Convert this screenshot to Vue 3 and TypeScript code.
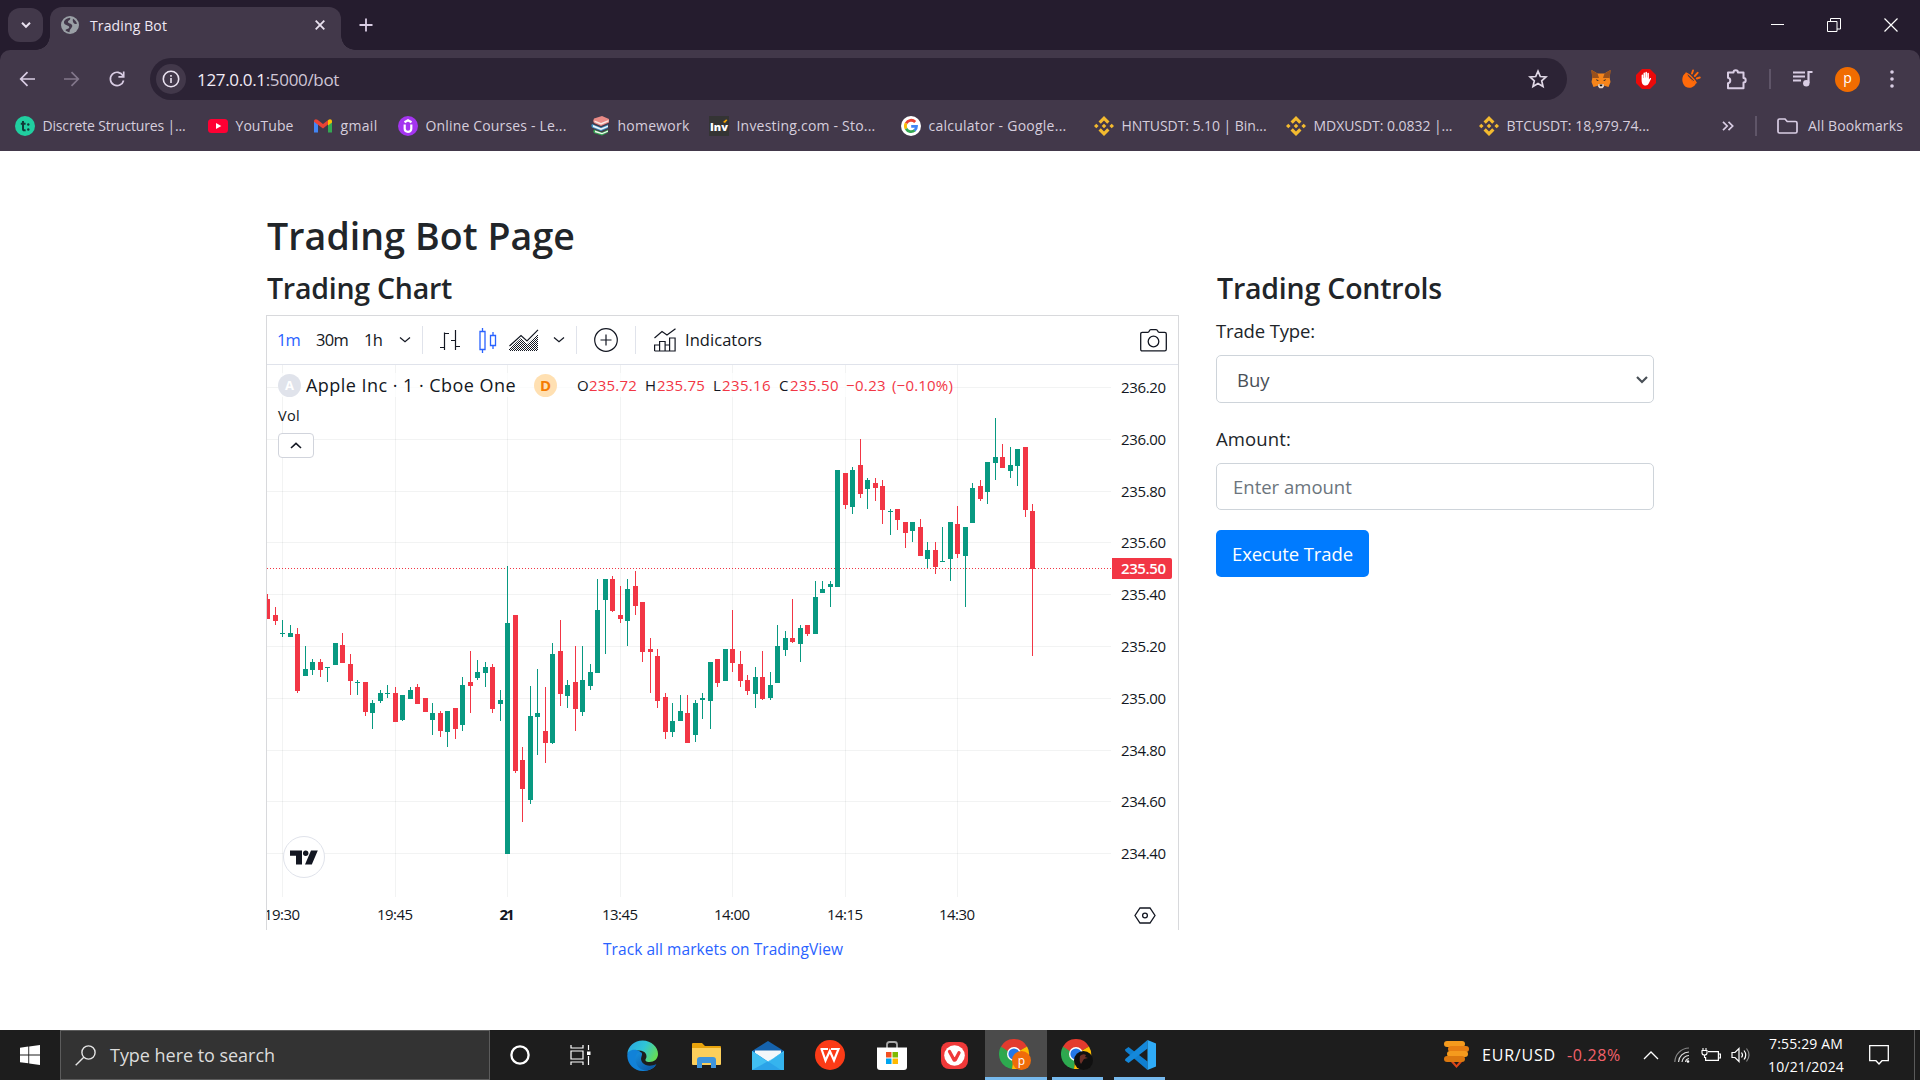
<script setup lang="ts">
import { ref } from 'vue'
import type { Directive } from 'vue'

interface Bookmark { icon: string; label: string; width: number; slot: number }
interface Candle { x: number; high: number; top: number; bottom: number; low: number; up: boolean }
type Bar = [up: 0 | 1, high: number, top: number, bottom: number, low: number]

// Tracks a label so that it occupies the given width in pixels.
const vFit: Directive<HTMLElement, number> = {
  mounted(el, { value }) {
    const count = (el.textContent ?? '').trim().length
    const natural = el.getBoundingClientRect().width
    el.style.letterSpacing = `${(value - natural) / count}px`
  },
}

const bookmarks: Bookmark[] = [
  { icon: 'toptal', label: 'Discrete Structures |...', width: 143, slot: 193 },
  { icon: 'youtube', label: 'YouTube', width: 58, slot: 105 },
  { icon: 'gmail', label: 'gmail', width: 37, slot: 85 },
  { icon: 'udemy', label: 'Online Courses - Le...', width: 141, slot: 192 },
  { icon: 'books', label: 'homework', width: 72, slot: 119 },
  { icon: 'inv', label: 'Investing.com - Sto...', width: 139, slot: 192 },
  { icon: 'google', label: 'calculator - Google...', width: 138, slot: 193 },
  { icon: 'binance', label: 'HNTUSDT: 5.10 | Bin...', width: 145, slot: 192 },
  { icon: 'binance', label: 'MDXUSDT: 0.0832 |...', width: 139, slot: 193 },
  { icon: 'binance', label: 'BTCUSDT: 18,979.74...', width: 143, slot: 192 },
]

// Bars as [up, high, bodyTop, bodyBottom, low], in thirds of a pixel from the segment's top.
const segments: { top: number; bars: Bar[] }[] = [
  {
    top: 185,
    bars: [
      [0, 132, 147, 207, 207], [0, 171, 195, 213, 225], [1, 210, 249, 252, 261], [1, 225, 249, 261, 261],
      [0, 234, 252, 423, 429], [1, 288, 357, 378, 378], [1, 327, 336, 360, 375], [0, 327, 336, 360, 381],
      [1, 351, 351, 354, 396], [1, 279, 279, 345, 345], [0, 249, 285, 339, 339], [0, 312, 342, 393, 435],
      [1, 390, 396, 399, 435], [0, 396, 396, 486, 498], [1, 450, 459, 489, 537], [1, 420, 429, 453, 459],
      [1, 405, 429, 432, 444], [0, 411, 429, 516, 516], [1, 435, 435, 510, 513], [1, 411, 420, 447, 447],
      [0, 402, 411, 462, 462], [0, 444, 444, 486, 486], [1, 459, 489, 510, 555], [0, 483, 489, 543, 561],
      [1, 483, 483, 546, 591], [0, 474, 474, 537, 567], [1, 381, 405, 525, 543], [0, 303, 396, 408, 489],
      [1, 330, 366, 384, 390], [1, 336, 351, 369, 411], [0, 342, 351, 477, 489], [1, 420, 450, 462, 513],
      [1, 48, 219, 912, 912], [0, 195, 195, 663, 669], [0, 591, 630, 717, 816], [1, 408, 498, 750, 762],
      [1, 357, 489, 501, 615], [0, 411, 543, 579, 639], [1, 279, 312, 579, 582], [0, 210, 303, 432, 468],
      [1, 390, 405, 438, 474], [0, 288, 396, 477, 543], [1, 288, 390, 486, 498], [1, 342, 366, 408, 420],
      [1, 87, 180, 369, 369], [1, 87, 87, 150, 312], [0, 78, 87, 183, 186], [0, 108, 195, 207, 219],
      [1, 87, 117, 213, 288], [0, 63, 108, 168, 195], [0, 156, 156, 306, 336], [0, 264, 297, 306, 429],
      [0, 297, 318, 453, 474], [0, 429, 441, 546, 567], [1, 459, 513, 546, 561], [1, 435, 483, 513, 513],
      [0, 435, 489, 579, 579], [1, 450, 459, 555, 576], [1, 429, 444, 450, 507], [1, 336, 336, 453, 537],
      [0, 327, 327, 399, 411], [1, 297, 297, 393, 393], [0, 180, 297, 339, 366], [0, 303, 342, 393, 411],
      [0, 375, 390, 423, 435], [1, 351, 381, 432, 474], [0, 303, 381, 447, 450], [1, 366, 405, 444, 450],
      [1, 225, 288, 399, 399], [1, 243, 264, 300, 318], [0, 147, 264, 276, 279],
    ],
  },
  {
    top: 35,
    bars: [
      [1, 675, 684, 732, 786], [0, 675, 675, 702, 708], [1, 543, 591, 702, 702], [1, 543, 567, 579, 579],
      [1, 543, 552, 561, 621], [1, 210, 210, 561, 561], [0, 219, 219, 315, 327], [1, 201, 210, 321, 342],
      [0, 117, 195, 282, 294], [1, 234, 240, 267, 327], [0, 234, 249, 264, 303], [0, 240, 258, 330, 372],
      [1, 327, 333, 336, 405], [0, 327, 327, 360, 390], [0, 366, 366, 399, 444], [1, 366, 366, 393, 426],
      [0, 357, 381, 468, 468], [1, 426, 450, 477, 504], [0, 426, 450, 501, 522], [1, 381, 483, 486, 486],
      [1, 366, 366, 477, 543], [0, 318, 372, 462, 474], [1, 381, 381, 468, 621], [1, 249, 264, 369, 369],
      [0, 240, 258, 297, 303], [1, 186, 186, 276, 312], [1, 54, 171, 189, 240], [0, 132, 171, 204, 204],
      [1, 141, 195, 213, 234], [1, 147, 147, 198, 258], [0, 141, 141, 330, 351], [0, 312, 333, 507, 768],
    ],
  },
]

const candles: Candle[] = segments
  .flatMap(({ top, bars }) => bars.map((bar) => ({ top, bar })))
  .map(({ top, bar: [up, high, bodyTop, bodyBottom, low] }, i) => ({
    x: Math.round(7.5 * i),
    high: top + high / 3,
    top: top + bodyTop / 3,
    bottom: top + bodyBottom / 3,
    low: top + low / 3,
    up: up === 1,
  }))

const prices = [
  { label: '236.20', y: 22 }, { label: '236.00', y: 74 }, { label: '235.80', y: 126 },
  { label: '235.60', y: 177 }, { label: '235.40', y: 229 }, { label: '235.20', y: 281 },
  { label: '235.00', y: 333 }, { label: '234.80', y: 385 }, { label: '234.60', y: 436 },
  { label: '234.40', y: 488 },
]
const times = [
  { label: '19:30', x: 15 }, { label: '19:45', x: 128 }, { label: '21', x: 240, bold: true },
  { label: '13:45', x: 353 }, { label: '14:00', x: 465 }, { label: '14:15', x: 578 }, { label: '14:30', x: 690 },
]

const legend = [
  { key: 'O', value: '235.72', kw: 12, vw: 48, gap: 8 },
  { key: 'H', value: '235.75', kw: 12, vw: 48, gap: 8 },
  { key: 'L', value: '235.16', kw: 9, vw: 49, gap: 8 },
  { key: 'C', value: '235.50', kw: 11, vw: 49, gap: 7 },
]

const tradeType = ref('buy')
const amount = ref('')
</script>

<template>
  <div class="screen">
    <header class="tabs">
      <button class="tab-search">
        <svg width="12" height="12" viewBox="0 0 12 12"><path d="M2 3.800l4 4 4-4" fill="none" stroke="#e9e1ef" stroke-width="2" /></svg>
      </button>
      <div class="tab">
        <svg width="18" height="18" viewBox="0 0 18 18">
          <circle cx="9" cy="9" r="9" fill="#9aa0a6" />
          <path d="M3 5.500C4 3.500 6 2 9 1.800c1 1-.4 2.300-1.800 3.100-.4 1-.3 1.800 1 2.300 2.200.6 3.400 1.500 3 3.200-.5 1.700-2.300 2.200-2.700 5.800-1.500-.2-3-.8-4.200-2.200 1.500-1.200 3.800-1 4-2.700C8 9.500 6 9.700 4.700 8.800 3.300 8 2.700 7 3 5.500z" fill="#42384a" />
          <path d="M12 2.800c2 1 3.600 3 3.900 5-1.500.6-2.600.3-3.300-.8-.7-1.200-1.200-2.600-.6-4.200z" fill="#42384a" />
        </svg>
        <span v-fit="77" class="tab-title">Trading Bot</span>
        <svg class="tab-close" width="10" height="10" viewBox="0 0 10 10"><path d="M.7.7l8.600 8.600M9.300.7L.7 9.300" stroke="#e9e1ef" stroke-width="1.800" /></svg>
      </div>
      <svg class="new-tab" width="14" height="14" viewBox="0 0 14 14"><path d="M7 .5v13M.5 7h13" stroke="#d9cde4" stroke-width="1.800" /></svg>
      <div class="window-controls">
        <svg width="13" height="14" viewBox="0 0 13 14"><path d="M0 6.500h13" stroke="#fff" stroke-width="1" /></svg>
        <svg width="14" height="14" viewBox="0 0 14 14"><path d="M.5 3.500h9.500v10H.5zM3.500 3.500v-3h10v10.500H10" fill="none" stroke="#fff" stroke-width="1" /></svg>
        <svg width="14" height="14" viewBox="0 0 14 14"><path d="M.5.5l13 13M13.500.5l-13 13" stroke="#fff" stroke-width="1.200" /></svg>
      </div>
    </header>

    <div class="toolbar">
      <svg class="nav" width="18" height="18" viewBox="0 0 18 18"><path d="M17 9H3M9.500 2.200L2.700 9l6.800 6.800" fill="none" stroke="#d9cde4" stroke-width="1.700" /></svg>
      <svg class="nav" width="18" height="18" viewBox="0 0 18 18"><path d="M1 9h14M8.500 2.200L15.300 9l-6.800 6.800" fill="none" stroke="#82778b" stroke-width="1.700" /></svg>
      <svg class="nav" width="18" height="18" viewBox="0 0 18 18"><path d="M15 5.800A6.700 6.700 0 1 0 15.600 10.500M15.700 1.500v5.300h-5.300" fill="none" stroke="#d9cde4" stroke-width="1.700" /></svg>
      <div class="omnibox">
        <span class="site-info">
          <svg width="18" height="18" viewBox="0 0 18 18"><circle cx="9" cy="9" r="7.700" fill="none" stroke="#e9e1ef" stroke-width="1.600" /><path d="M9 8v5M9 5v1.800" stroke="#e9e1ef" stroke-width="1.600" /></svg>
        </span>
        <span v-fit="142" class="url">127.0.0.1<i>:5000/bot</i></span>
        <svg class="star" width="20" height="20" viewBox="0 0 20 20"><path d="M10 2.200l2.300 5.300 5.700.5-4.300 3.800 1.300 5.600-5-3-5 3 1.300-5.600L2 8l5.700-.5z" fill="none" stroke="#e0d8e6" stroke-width="1.700" /></svg>
      </div>
      <svg class="ext fox" width="20" height="20" viewBox="0 0 20 20">
        <path d="M.5 1l6 3.500h7l6-3.500-.8 8 .8 4-2 5-5-1.500-1 2h-3l-1-2-5 1.500-2-5 .8-4z" fill="#f6851b" />
        <path d="M.5 1l6 3.500L8 9 1.300 9zM19.500 1l-6 3.500L12 9l6.700 0z" fill="#99501c" />
        <path d="M5 10l3 1.500-2 .6zM15 10l-3 1.500 2 .6z" fill="#3a2f2a" />
        <path d="M7.500 15h5l.5 2.500-1.500 1.700h-3L7 17.500z" fill="#e8d8cc" /><path d="M8.500 15.500h3l-.5 1.800H9z" fill="#161616" />
      </svg>
      <svg class="ext" width="20" height="20" viewBox="0 0 20 20">
        <path d="M6 0h8l6 6v8l-6 6H6l-6-6V6z" fill="#ea0a0a" />
        <path d="M5.600 11V6.300a.8.8 0 0 1 1.600 0V9h.3V4.300a.8.8 0 0 1 1.600 0V8.500h.3V3.600a.8.8 0 0 1 1.600 0v4.900h.3V4.600a.8.8 0 0 1 1.600 0V10.500l1-1.200c.6-.6 1.500-.2 1.100.6l-2.300 4.600c-.6 1.300-1.500 2-3 2-2.600 0-4.100-1.600-4.100-5.500z" fill="#fff" />
      </svg>
      <svg class="ext" width="20" height="20" viewBox="0 0 20 20">
        <path d="M5.200 3.700C1.800 5.200.4 9.800 2 14.200c1.400 4 5.300 5.500 8.600 4.200 2.500-1 4.200-2.900 4.600-5C12 13.500 6.200 8.500 5.200 3.700z" fill="#ff6a0a" />
        <path d="M5.300 4.200c2.300.5 8.500 6.300 9.700 9.300-3-.2-9.300-5.700-9.700-9.300z" fill="#42384a" stroke="#ff6a0a" stroke-width="1.300" />
        <path d="M11 4.500l1-3M13.800 7l2.800-3.200M15.800 9.500l3-1" stroke="#ff6a0a" stroke-width="1.900" stroke-linecap="round" />
      </svg>
      <svg class="ext puzzle" width="21" height="21" viewBox="0 0 21 21"><path d="M2 3.500h5.500a2.200 2.200 0 0 1 4.400 0H17.500V9a2.200 2.200 0 0 1 0 4.400v5.800H2v-5a2.800 2.800 0 0 0 0-5.500z" fill="none" stroke="#d9cde4" stroke-width="2" stroke-linejoin="round" /></svg>
      <span class="rule"></span>
      <svg class="media" width="20" height="18" viewBox="0 0 20 18"><path d="M0 2.500h12M0 6.500h12M0 10.500h8" stroke="#d9cde4" stroke-width="2" /><path d="M19.500 2h-4v11" fill="none" stroke="#d9cde4" stroke-width="2.200" /><circle cx="13.300" cy="13.300" r="3.200" fill="#d9cde4" /></svg>
      <span class="avatar">p</span>
      <svg class="menu" width="6" height="18" viewBox="0 0 6 18"><g fill="#d9cde4"><circle cx="3" cy="2" r="1.800" /><circle cx="3" cy="9" r="1.800" /><circle cx="3" cy="16" r="1.800" /></g></svg>
    </div>

    <nav class="bookmarks">
      <a v-for="(b, i) in bookmarks" :key="i" class="bookmark" :style="{ width: b.slot + 'px' }">
        <svg width="20" height="20" viewBox="0 0 20 20">
          <template v-if="b.icon === 'toptal'">
            <circle cx="10" cy="10" r="10" fill="#20cfa0" />
            <path d="M8 5v8.200q0 1.500 2.600 1M5.800 7.800h4.800" fill="none" stroke="#123a38" stroke-width="2" /><circle cx="13.300" cy="8.500" r="1.200" fill="#123a38" /><circle cx="13.300" cy="13.500" r="1.200" fill="#123a38" />
          </template>
          <template v-else-if="b.icon === 'youtube'">
            <rect y="3" width="20" height="14" rx="3.500" fill="#ff0033" /><path d="M8 7l5.300 3L8 13z" fill="#fff" />
          </template>
          <template v-else-if="b.icon === 'gmail'">
            <path d="M1 16.500V5l4 3v8.500z" fill="#4285f4" /><path d="M15 16.500V8l4-3v11.500z" fill="#34a853" />
            <path d="M1 5.500c0-2.300 2-2.800 3.500-1.700L10 8l5.500-4.200v4.300L10 12.400 1 5.700z" fill="#ea4335" /><path d="M15 4.200c2-1.600 4-.8 4 1.500V6.500l-4 3z" fill="#fbbc04" />
          </template>
          <template v-else-if="b.icon === 'udemy'">
            <circle cx="10" cy="10" r="10" fill="#a435f0" /><path d="M6.700 8.500v4.300c0 4 6.600 4 6.600 0V8.500M6.500 6.300L10 4.200l3.500 2.100" fill="none" stroke="#fff" stroke-width="2.200" />
          </template>
          <template v-else-if="b.icon === 'books'">
            <path d="M4 13.500l8 3 6-3v3l-6 3-8-2.500q-1.500-2 0-3.500z" fill="#35a853" /><path d="M5 14.500l7 2.500 6-2.500v1.300L12 18.300 5 16.200z" fill="#f3f5ef" />
            <path d="M2 8l9 3.500 7-3v3.500l-7 3-9-3.500q-1.500-2 0-3.500z" fill="#3f93c8" /><path d="M3 9l8 3.200 7-2.700v1.600l-7 2.800-8-3z" fill="#eef4f8" />
            <path d="M4 2.500L12 0l7 3v3.500L11 10 4 7q-1.500-2.500 0-4.500z" fill="#e98a86" /><path d="M4.500 4.500L11 7l7.500-3v1.500L11 8.700 4.500 6z" fill="#f8e6e2" />
          </template>
          <template v-else-if="b.icon === 'inv'">
            <rect width="20" height="20" fill="#343434" /><text x="1" y="15" class="inv" textLength="18">Inv</text><path d="M14 6l3-2.500 1.500.5L16 7z" fill="#f7a600" />
          </template>
          <template v-else-if="b.icon === 'google'">
            <circle cx="10" cy="10" r="10" fill="#fff" />
            <g fill="none" stroke-width="2.800"><path d="M5.100 7.300A5.700 5.700 0 0 1 14.200 6" stroke="#ea4335" /><path d="M5.100 7.300a5.700 5.700 0 0 0 0 5.500" stroke="#fbbc05" /><path d="M5.100 12.800a5.700 5.700 0 0 0 8.700 1.500" stroke="#34a853" /><path d="M10.200 10.300h5.300q0 2.500-1.900 4.200" stroke="#4285f4" /></g>
          </template>
          <template v-else>
            <g fill="#f3ba2f"><path d="M10 0l5.500 5.500-2.300 2.300L10 4.600 6.800 7.800 4.500 5.500zM10 20l5.500-5.500-2.300-2.300-3.200 3.200-3.200-3.200-2.300 2.300zM10 7.700l2.300 2.300-2.300 2.300L7.700 10zM2.300 7.700L4.600 10l-2.300 2.300L0 10zM17.700 7.700L20 10l-2.300 2.300-2.300-2.300z" /></g>
          </template>
        </svg>
        <span v-fit="b.width">{{ b.label }}</span>
      </a>
      <svg class="overflow" width="12" height="10" viewBox="0 0 12 10"><path d="M1 .8L5.200 5 1 9.200M6.500.8L10.700 5 6.500 9.200" fill="none" stroke="#d9cde4" stroke-width="1.700" /></svg>
      <span class="rule"></span>
      <svg class="folder" width="21" height="16" viewBox="0 0 21 16"><path d="M1 2.500Q1 1 2.500 1H8l2.200 2.500h8.300Q20 3.500 20 5v8.500q0 1.500-1.500 1.500h-16Q1 15 1 13.500z" fill="none" stroke="#d9cde4" stroke-width="1.700" /></svg>
      <span v-fit="95">All Bookmarks</span>
    </nav>

    <main class="page">
      <h1 v-fit="309">Trading Bot Page</h1>
      <div class="columns">
        <section class="chart-col">
          <h2><span v-fit="185">Trading Chart</span></h2>
          <div class="widget">
            <div class="chart-bar">
              <span v-fit="23" class="interval active">1m</span>
              <span v-fit="32" class="interval i30">30m</span>
              <span v-fit="18" class="interval i60">1h</span>
              <svg class="chev c1" width="12" height="6" viewBox="0 0 12 6"><path d="M1 .5l5 4.300L11 .5" fill="none" stroke="#131722" stroke-width="1.200" /></svg>
              <i class="sep s1"></i>
              <svg class="t-bars" width="20" height="22" viewBox="0 0 20 22"><path d="M4.500 21V3.500M4.500 4.500H9M0 18.500h4.500M15.500 1v20M11 11.500h4.500M15.500 17.500H20" fill="none" stroke="#131722" stroke-width="1.200" /></svg>
              <svg class="t-candles" width="18" height="25" viewBox="0 0 18 25"><path d="M1 3.500h5v18H1zM3.500 0v3.500M3.500 21.500V25M11.500 7.500h5v10h-5zM14 4v3.500M14 17.500V21" fill="none" stroke="#2962ff" stroke-width="1.300" /></svg>
              <svg class="t-area" width="30" height="22" viewBox="0 0 30 22">
                <defs><pattern id="dots" width="2" height="2" patternUnits="userSpaceOnUse"><rect width="1" height="1" fill="#131722" /><rect x="1" y="1" width="1" height="1" fill="#131722" /></pattern></defs>
                <path d="M0 22v-2l12-11 6 6L29 5v17z" fill="url(#dots)" /><path d="M.5 17L12 6.500l6 5.500L29 .8" fill="none" stroke="#131722" stroke-width="1.200" />
              </svg>
              <svg class="chev c2" width="12" height="6" viewBox="0 0 12 6"><path d="M1 .5l5 4.300L11 .5" fill="none" stroke="#131722" stroke-width="1.200" /></svg>
              <i class="sep s2"></i>
              <svg class="t-plus" width="24" height="24" viewBox="0 0 24 24"><circle cx="12" cy="12" r="11.300" fill="none" stroke="#131722" stroke-width="1.200" /><path d="M12 6.500v11M6.500 12h11" stroke="#131722" stroke-width="1.200" /></svg>
              <i class="sep s3"></i>
              <svg class="t-ind" width="22" height="24" viewBox="0 0 22 24"><path d="M.5 10L8 3.500l5 3.500L21.500.7M.6 23V17h5v6M5.600 23V13.500h5.500V23M11.100 17h4.500v6M15.600 23V10h5.500v13zM.6 23h20.500" fill="none" stroke="#131722" stroke-width="1.200" /></svg>
              <span v-fit="77" class="interval ind">Indicators</span>
              <svg class="t-cam" width="27" height="23" viewBox="0 0 27 23"><path d="M.7 5q0-1.600 1.600-1.600h5.400Q8.800 3.400 9.300 2T11 .7h5Q17.200.7 17.700 2t1.600 1.400h5.400q1.600 0 1.600 1.600v15.300q0 1.600-1.600 1.600H2.300Q.7 21.900.7 20.300z" fill="none" stroke="#131722" stroke-width="1.300" /><circle cx="13.500" cy="12.500" r="5.300" fill="none" stroke="#131722" stroke-width="1.300" /></svg>
            </div>

            <div class="plot">
              <svg class="canvas" width="911" height="565" viewBox="0 0 911 565">
                <g class="grid">
                  <rect v-for="t in times" :key="t.label" :x="t.x" y="0" width="1" height="532" />
                  <rect v-for="p in prices" :key="p.label" x="0" :y="p.y" width="844" height="1" />
                </g>
                <path d="M0 203.500H844" stroke="#f23645" stroke-dasharray="1 2" />
                <g v-for="(c, i) in candles" :key="i" :fill="c.up ? '#089981' : '#f23645'">
                  <rect :x="c.x" :y="c.high" width="1" :height="c.low - c.high" />
                  <rect :x="c.x - 2" :y="c.top" width="5" :height="c.bottom - c.top" />
                </g>
                <g class="axis">
                  <text v-for="p in prices" :key="p.label" x="854" :y="p.y + 6" textLength="45">{{ p.label }}</text>
                  <text v-for="t in times" :key="t.label" :x="t.x" y="555" text-anchor="middle" :textLength="t.bold ? 15 : 36" :class="{ bold: t.bold }">{{ t.label }}</text>
                </g>
                <path d="M845 193h58q2 0 2 2v17q0 2-2 2h-58z" fill="#f23645" />
                <text x="854" y="209" textLength="45" class="last">235.50</text>
                <path d="M873 543h10l5 7.500-5 7.500h-10l-5-7.500z" fill="none" stroke="#131722" stroke-width="1.300" /><circle cx="878" cy="550.500" r="2.400" fill="none" stroke="#131722" stroke-width="1.300" />
                <circle cx="37" cy="492" r="20.500" fill="#fff" stroke="#e0e3eb" />
                <path d="M23 485.500h12v14h-6v-8.800h-6zM44 485.500h6.800l-6 14h-6.800z" fill="#131722" /><circle cx="38.700" cy="488.300" r="2.700" fill="#131722" />
              </svg>
              <div class="overlay">
                <div class="legend">
                  <span class="badge-a">A</span>
                  <span v-fit="210" class="symbol">Apple Inc · 1 · Cboe One</span>
                  <span class="badge-d">D</span>
                  <span class="ohlc">
                    <template v-for="l in legend" :key="l.key">
                      <span class="key" :style="{ width: l.kw + 'px' }">{{ l.key }}</span><b :style="{ width: l.vw + l.gap + 'px' }"><span v-fit="l.vw">{{ l.value }}</span></b>
                    </template>
                    <b class="chg"><span v-fit="40">−0.23</span></b><b><span v-fit="61">(−0.10%)</span></b>
                  </span>
                </div>
                <span v-fit="22" class="vol">Vol</span>
                <button class="collapse"><svg width="12" height="7" viewBox="0 0 12 7"><path d="M1 6l5-4.600L11 6" fill="none" stroke="#131722" stroke-width="1.600" /></svg></button>
              </div>
            </div>
          </div>
          <a class="track"><span v-fit="240">Track all markets on TradingView</span></a>
        </section>

        <section class="controls">
          <h2><span v-fit="225">Trading Controls</span></h2>
          <label><span v-fit="99">Trade Type:</span></label>
          <div class="select-wrap">
            <select v-model="tradeType" class="field"><option value="buy">Buy</option><option value="sell">Sell</option></select>
            <svg width="12" height="8" viewBox="0 0 12 8"><path d="M1 1l5 5 5-5" fill="none" stroke="#495057" stroke-width="2.200" /></svg>
          </div>
          <label class="second"><span v-fit="75">Amount:</span></label>
          <input v-model="amount" class="field" placeholder="Enter amount" />
          <button class="execute"><span v-fit="121">Execute Trade</span></button>
        </section>
      </div>
    </main>

    <footer class="taskbar">
      <div class="start"><svg width="20" height="20" viewBox="0 0 20 20"><path d="M0 2.800l8.300-1.200v7.800H0zM9.200 1.500L20 0v9.400H9.200zM0 10.400h8.300v7.900L0 17.200zM9.200 10.400H20V20L9.200 18.400z" fill="#fff" /></svg></div>
      <div class="search">
        <svg width="21" height="21" viewBox="0 0 21 21"><circle cx="13.500" cy="7.500" r="6.600" fill="none" stroke="#e6e6e6" stroke-width="1.400" /><path d="M8.800 12.200L.7 20.300" stroke="#e6e6e6" stroke-width="1.400" /></svg>
        <span v-fit="165">Type here to search</span>
      </div>
      <div class="apps">
        <div class="app cortana"><svg width="20" height="20" viewBox="0 0 20 20"><circle cx="10" cy="10" r="8.600" fill="none" stroke="#fff" stroke-width="2.300" /></svg></div>
        <div class="app cortana"><svg width="21" height="20" viewBox="0 0 21 20"><path d="M1 0v3h12V0M1 6h12v8H1zM1 20v-3h12v3M18.500 0v5M18.500 11v9" fill="none" stroke="#fff" stroke-width="1.200" /><rect x="17" y="6.500" width="3.500" height="3.500" fill="#fff" /></svg></div>
        <div class="app edge">
          <svg width="31" height="31" viewBox="0 0 31 31">
            <defs><linearGradient id="edgeTop" x1="0" x2="1" y1=".2" y2=".6"><stop offset="0" stop-color="#2ba8e0" /><stop offset=".5" stop-color="#2fc5d8" /><stop offset="1" stop-color="#66dd55" /></linearGradient><linearGradient id="edgeLow" x1="0" x2="1" y1="0" y2="1"><stop offset="0" stop-color="#1690df" /><stop offset="1" stop-color="#0b4f9c" /></linearGradient></defs>
            <path d="M.3 14C1 6 7.500.5 15.500.5 24.500.5 31 7 31 14c0 5-4 8-8.500 8-3.500 0-5-1.500-3.500-3.500 1.500-2.500 0-8-7-8C6 10.500 2 12 .3 14z" fill="url(#edgeTop)" />
            <path d="M.3 16C0 9.500 8 8 13 11.500 9 13 7.500 26.500 21 27.500c3 .2 5.500-.8 8-2.500C26 29 21 31 15.500 31 7 31 .5 24 .3 16z" fill="#1182d8" />
            <path d="M12 11.500c-7 6-3 17.500 6 19 5 0 9-2.500 11.500-6.500-9 4.500-17.500-1-15-7.500.5-1.500 1-2.500 0-4z" fill="url(#edgeLow)" />
          </svg>
        </div>
        <div class="app">
          <svg width="29" height="25" viewBox="0 0 29 25"><path d="M0 1q0-1 1-1h9l3 3h15q1 0 1 1v5H0z" fill="#e8a30c" /><path d="M0 5h28q1 0 1 1v15q0 1-1 1H1q-1 0-1-1z" fill="#fccf5b" /><path d="M5 25v-8q0-3 3-3h13q3 0 3 3v8h-5v-5h-9v5z" fill="#3f95dc" /></svg>
        </div>
        <div class="app">
          <svg width="32" height="29" viewBox="0 0 32 29"><path d="M0 10L16 0l16 10v3H0z" fill="#1563ad" /><path d="M3 9.500h26v6L16 24 3 15z" fill="#f3f7fa" /><path d="M0 10l16 11L32 10v19H0z" fill="#35b4ee" /><path d="M0 10l29 19H0z" fill="#2ba3e8" /><path d="M0 10l16 11 16-11v1.500L0 29z" fill="#41bff2" /></svg>
        </div>
        <div class="app">
          <svg width="30" height="30" viewBox="0 0 30 30"><circle cx="15" cy="15" r="15" fill="#fb3b17" /><path d="M5.500 9h7.500M6.500 9l4 11.500 4.300-9.500 4.200 9.500L23.500 9H16" fill="none" stroke="#fff" stroke-width="2.200" /></svg>
        </div>
        <div class="app">
          <svg width="30" height="29" viewBox="0 0 30 29"><path d="M10 8V3.500Q10 1 12.500 1h5Q20 1 20 3.500V8" fill="none" stroke="#a8a8a8" stroke-width="1.800" /><path d="M0 6.500h30V26q0 3-3 3H3q-3 0-3-3z" fill="#fff" /><path d="M9 11h5.500v5.500H9z" fill="#f25022" /><path d="M15.500 11H21v5.500h-5.500z" fill="#7fba00" /><path d="M9 17.500h5.500V23H9z" fill="#00a4ef" /><path d="M15.500 17.500H21V23h-5.500z" fill="#ffb900" /></svg>
        </div>
        <div class="app">
          <svg width="27" height="27" viewBox="0 0 27 27"><rect width="27" height="27" rx="8" fill="#ef3939" /><circle cx="13.500" cy="13.500" r="10.300" fill="#fff" /><path d="M8.500 9.500l4.500 8.300q.7.800 1.300 0l3.700-7" fill="none" stroke="#ef3939" stroke-width="3.300" stroke-linecap="round" /></svg>
        </div>
        <div v-for="n in 2" :key="n" class="app running" :class="{ current: n === 1 }">
          <svg width="34" height="32" viewBox="0 0 34 32">
            <path d="M15 15L2 7.500A15 15 0 0 1 28 7.500z" fill="#e33b2e" /><path d="M15 15L2 7.500a15 15 0 0 0 11 22.400z" fill="#2da94f" /><path d="M15 15l13-7.500a15 15 0 0 1-15 22.400z" fill="#fdbd00" /><path d="M2 7.500L8.500 18 15 15V7.500z" fill="#e33b2e" /><path d="M2 7.500l6.700 11.200L13 15z" fill="#2da94f" />
            <circle cx="15" cy="15" r="7" fill="#fff" /><circle cx="15" cy="15" r="5.600" fill="#2478e8" />
            <circle cx="22.500" cy="21.500" r="9.500" :fill="n === 1 ? '#ef6c0a' : '#101010'" />
            <text v-if="n === 1" x="22.500" y="26" text-anchor="middle" class="chip">p</text>
            <path v-else d="M19 17q3-3 6-1l-1 2 3 1-4 1-3 5q-2-3-1-8z" fill="#6d3028" />
          </svg>
        </div>
        <div class="app running">
          <svg width="31" height="30" viewBox="0 0 31 30"><path d="M0 9.500L3.500 7 22.500 21.500V30L.3 11z" fill="#0f7fd0" /><path d="M0 20.500L3.500 23 22.500 8.500V0L.3 19z" fill="#1488da" /><path d="M22.500 0L31 3.500v23L22.500 30z" fill="#2fabf7" /></svg>
        </div>
      </div>
      <div class="tray">
        <svg class="coins" width="27" height="29" viewBox="0 0 27 29"><rect x="1" y="0" width="21" height="6" rx="3" fill="#f59a1d" /><rect x="5" y="5" width="21" height="6" rx="3" fill="#e77e12" /><rect x="4" y="10" width="21" height="6" rx="3" fill="#f59a1d" /><rect x="1" y="15" width="21" height="6" rx="3" fill="#dc780f" /><path d="M8 21l5.500 6L19 21h-3l-2.500 3-2.500-3z" fill="#dc4619" /></svg>
        <span v-fit="74" class="pair">EUR/USD</span>
        <span v-fit="54" class="delta">-0.28%</span>
        <svg class="up" width="16" height="9" viewBox="0 0 16 9"><path d="M1 8l7-7 7 7" fill="none" stroke="#fff" stroke-width="1.300" /></svg>
        <svg class="wifi" width="16" height="16" viewBox="0 0 16 16"><g fill="none" stroke-width="1.200"><path d="M.8 15A14.500 14.500 0 0 1 15 1" stroke="#888" /><path d="M4.500 15A10.500 10.500 0 0 1 15 5" stroke="#ddd" /><path d="M8 15a7 7 0 0 1 7-6.500M11.500 15a4 4 0 0 1 3.500-3.500" stroke="#ddd" /></g><circle cx="14" cy="14.500" r="1.300" fill="#fff" /></svg>
        <svg class="battery" width="20" height="15" viewBox="0 0 20 15"><path d="M7 3.600h10.400v8.800H4.600V9M17.400 6h2v4h-2" fill="none" stroke="#fff" stroke-width="1.200" /><path d="M1 2.500h5V5q0 2-2.500 2T1 5zM2 0v2.500M5 0v2.500M3.500 7v3" fill="none" stroke="#fff" stroke-width="1.100" /></svg>
        <svg class="speaker" width="20" height="16" viewBox="0 0 20 16"><path d="M1 5.500h3L8 1.500v13L4 10.500H1z" fill="none" stroke="#fff" stroke-width="1.200" /><path d="M10.500 5.500q2 2.500 0 5M13 3.500q3.500 4.500 0 9" fill="none" stroke="#fff" stroke-width="1.200" /><path d="M15.500 1.500q5 6.500 0 13" fill="none" stroke="#888" stroke-width="1.200" /></svg>
        <div class="clock"><span v-fit="74">7:55:29 AM</span><span v-fit="76">10/21/2024</span></div>
        <svg class="note" width="20" height="20" viewBox="0 0 20 20"><path d="M.7.7h18.600v15H13L10 19l-3-3.300H.7z" fill="none" stroke="#fff" stroke-width="1.300" /></svg>
        <i class="peek"></i>
      </div>
    </footer>
  </div>
</template>

<style>
body { margin: 0; overflow: hidden; }
</style>

<style scoped>
.screen { width: 1920px; height: 1080px; display: flex; flex-direction: column; background: #fff; font-family: "Open Sans", "Noto Sans", sans-serif; color: #212529; white-space: nowrap; }
.screen *, .screen *::before, .screen *::after { box-sizing: border-box; }
svg { display: block; flex: none; }
button { font: inherit; border: 0; padding: 0; }
span[class], .bookmark span { flex: none; }
i { font-style: normal; }

.tabs { height: 50px; flex: none; background: #251c2e; display: flex; align-items: center; }
.tab-search { width: 35px; height: 34px; margin-left: 8px; border-radius: 12px; background: #42384a; display: flex; align-items: center; justify-content: center; }
.tab { position: relative; width: 291px; height: 43px; margin: 7px 0 0 7px; padding: 0 16px 7px 11px; border-radius: 12px 12px 0 0; background: #42384a; display: flex; align-items: center; color: #efe8f4; font-size: 14px; }
.tab::before, .tab::after { content: ""; position: absolute; bottom: 0; width: 14px; height: 14px; }
.tab::before { left: -14px; background: radial-gradient(circle at 0 0, transparent 13.500px, #42384a 14px); }
.tab::after { right: -14px; background: radial-gradient(circle at 100% 0, transparent 13.500px, #42384a 14px); }
.tab-title { margin-left: 11px; }
.tab-close { margin-left: auto; }
.new-tab { margin-left: 18px; }
.window-controls { margin-left: auto; padding-right: 22px; display: flex; gap: 43px; align-items: center; }

.toolbar { height: 58px; flex: none; display: flex; align-items: center; padding-left: 18px; background: #42384a; border-radius: 10px 10px 0 0; box-shadow: 0 -10px 0 #251c2e; clip-path: inset(0); }
.nav { margin-right: 27px; }
.omnibox { width: 1417px; height: 42px; margin-left: -3px; border-radius: 21px; background: #2c2335; display: flex; align-items: center; padding: 0 19px 0 6px; }
.site-info { width: 30px; height: 30px; border-radius: 50%; background: #42384a; display: flex; align-items: center; justify-content: center; }
.url { margin-left: 11px; font-size: 17px; color: #f2ecf6; }
.url i { color: #cfc6d6; }
.star { margin-left: auto; }
.ext { margin-left: 25px; }
.fox { margin-left: 24px; }
.rule { width: 2px; height: 20px; background: #5f5568; margin-left: 22px; }
.media { margin-left: 22px; }
.avatar { width: 25px; height: 25px; margin-left: 22px; border-radius: 50%; background: #f06c00; color: #fff; font-size: 14px; line-height: 22px; text-align: center; }
.menu { margin-left: 29px; }

.bookmarks { height: 43px; flex: none; display: flex; align-items: center; padding: 0 0 8px 15px; background: #42384a; color: #d6cedd; font-size: 14px; }
.bookmark { display: flex; align-items: center; gap: 7.500px; flex: none; }
.bookmark span, .folder + span { margin-top: -1px; }
.overflow { margin-left: 51px; }
.bookmarks .rule { margin-left: 21px; }
.folder { margin: 0 10px 0 20px; }
.inv { font: 800 11px "Open Sans", sans-serif; fill: #fff; }

.page { height: 879px; flex: none; padding: 62px 0 0 266px; }
h1, h2 { margin: 0; font-weight: 600; }
h1 { display: inline-block; font-size: 37.500px; line-height: 46px; padding-left: 1px; }
h2 { font-size: 28.500px; line-height: 36px; padding-left: 1px; }
.columns { display: flex; margin-top: 11px; }
.chart-col { width: 914px; }
.widget { margin-top: 9px; height: 615px; border: 1px solid #d8d9dc; border-bottom: 0; width: 913px; color: #131722; }
.chart-bar { height: 49px; border-bottom: 1px solid #e0e3eb; display: flex; align-items: center; padding-left: 10px; }
.interval { font-size: 16.500px; line-height: 46px; margin-top: -1px; }
.active { color: #2962ff; }
.i30 { margin-left: 16px; }
.i60 { margin-left: 16px; }
.c1 { margin-left: 17px; }
.c2 { margin-left: 14px; }
.sep { width: 1px; height: 28px; background: #e0e3eb; flex: none; }
.s1 { margin-left: 11px; }
.s2 { margin-left: 11px; }
.s3 { margin-left: 17px; }
.t-bars { margin-left: 17px; }
.t-candles { margin-left: 19px; }
.t-area { margin-left: 12px; }
.t-plus { margin-left: 17px; }
.t-ind { margin-left: 18px; }
.ind { margin-left: 9px; }
.t-cam { margin: 0 11px 0 auto; }
.plot { position: relative; height: 565px; overflow: hidden; }
.grid { fill: rgba(42, 46, 57, 0.06); }
.axis text { font-size: 15px; fill: #131722; }
.axis .bold { font-weight: 700; }
.last { font-size: 15px; font-weight: 600; fill: #fff; }
.overlay { position: absolute; left: 11px; top: 8px; display: flex; flex-direction: column; align-items: flex-start; }
.legend { display: flex; align-items: center; height: 24px; background: rgba(255, 255, 255, 0.700); }
.badge-a, .badge-d { width: 23px; height: 23px; border-radius: 50%; text-align: center; line-height: 23px; font-weight: 700; }
.badge-a { background: #e0e3eb; color: #fff; font-size: 13px; }
.badge-d { background: #ffe0b2; color: #f57c00; font-size: 15px; margin-left: 18px; }
.symbol { font-size: 18px; margin-left: 5px; line-height: 24px; }
.ohlc { display: flex; font-size: 15px; line-height: 22px; margin-left: 20px; }
.ohlc b { font-weight: 400; color: #f23645; }
.ohlc .chg { width: 46px; }
.vol { font-size: 14.500px; line-height: 20px; margin-top: 9px; }
.collapse { width: 36px; height: 25px; margin-top: 7px; background: #fff; border: 1px solid #d1d4dc; border-radius: 4px; display: flex; align-items: center; justify-content: center; }
.track { display: block; text-align: center; color: #2962ff; font-size: 15.500px; line-height: 39px; }

.controls { width: 438px; margin-left: 36px; }
label { display: block; font-size: 18.500px; line-height: 30px; margin: 10px 0 9px; }
label.second { margin-top: 21px; }
.select-wrap { position: relative; height: 48px; }
.select-wrap svg { position: absolute; right: 6px; top: 21px; }
.field { display: block; width: 438px; height: 47px; border: 1px solid #ced4da; border-radius: 5px; background: #fff; color: #495057; font: 18.500px "Open Sans", sans-serif; padding: 0 16px; appearance: none; outline: 0; }
select.field { height: 48px; padding-left: 20px; }
.field::placeholder { color: #6c757d; opacity: 1; }
.execute { display: block; width: 153px; height: 47px; margin-top: 20px; border-radius: 5px; background: #007bff; color: #fff; font-size: 18.500px; }

.taskbar { height: 50px; flex: none; background: #1d1d1d; display: flex; color: #fff; }
.start { width: 60px; display: flex; align-items: center; justify-content: center; }
.search { width: 430px; background: #333; border: 1px solid #5c5c5c; display: flex; align-items: center; padding-left: 14px; font-size: 18px; color: #dcdcdc; }
.search span { margin-left: 14px; }
.apps { display: flex; }
.app { width: 62px; display: flex; align-items: center; justify-content: center; position: relative; }
.cortana { width: 60px; }
.edge { width: 65px; }
.running::after { content: ""; position: absolute; left: 5px; right: 6px; bottom: 0; height: 3px; background: #76b9ed; }
.current { background: #4b4b4b; }
.current::after { left: 0; right: 0; }
.chip { font: 12px "Open Sans", sans-serif; fill: #fff; }
.tray { margin-left: auto; display: flex; align-items: center; }
.pair, .delta { font-size: 16px; }
.pair { margin-left: 12px; }
.delta { color: #f2616a; margin-left: 11px; }
.up { margin-left: 22px; }
.wifi { margin-left: 15px; }
.battery { margin-left: 11px; }
.speaker { margin-left: 10px; }
.clock { width: 80px; margin-left: 15px; display: flex; flex-direction: column; align-items: center; font-size: 14px; line-height: 23px; }
.note { margin-left: 23px; }
.peek { width: 1px; height: 50px; background: #5a5a5a; margin: 0 5px 0 25px; }
</style>
